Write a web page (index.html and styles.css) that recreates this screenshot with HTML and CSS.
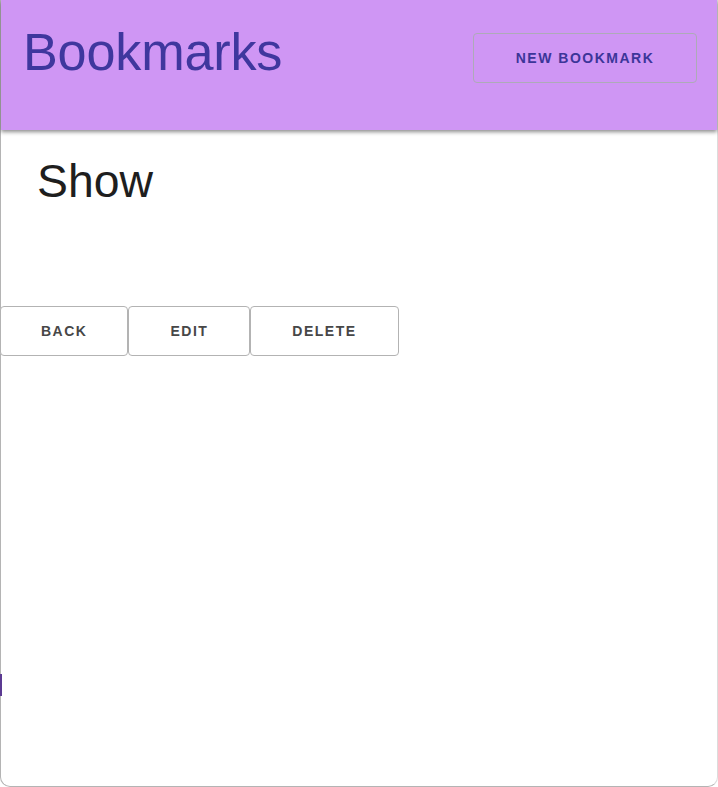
FILE: index.html
```html
<!DOCTYPE html>
<html>
<head>
<meta charset="utf-8">
<link rel="stylesheet" href="styles.css">
</head>
<body>
<div class="window">
  <header class="appbar">
    <h1 class="brand">Bookmarks</h1>
    <button class="btn btn-header">NEW BOOKMARK</button>
  </header>
  <main class="content">
    <h2 class="page-title">Show</h2>
    <div class="actions">
      <button class="btn">BACK</button>
      <button class="btn">EDIT</button>
      <button class="btn">DELETE</button>
    </div>
  </main>
  <span class="edge-mark"></span>
</div>
</body>
</html>
```
FILE: styles.css
```css
html, body {
  margin: 0;
  padding: 0;
  background: #ffffff;
}
body {
  font-family: "Liberation Sans", Arial, sans-serif;
}
.window {
  position: relative;
  box-sizing: border-box;
  width: 718px;
  height: 787px;
  border-left: 1px solid #b4b4b4;
  border-right: 1px solid #dcdcdc;
  border-bottom: 1px solid #b4b4b4;
  border-radius: 0 0 10px 10px;
  background: #ffffff;
}
.appbar {
  position: relative;
  z-index: 1;
  height: 130px;
  background: #cf96f4;
  box-shadow: 0 2px 4px rgba(0, 0, 0, 0.45);
  display: flex;
  justify-content: space-between;
  align-items: flex-start;
}
.brand {
  margin: 22px 0 0 22px;
  font-size: 52.2px;
  line-height: 60px;
  font-weight: 400;
  color: #3f379e;
  letter-spacing: -0.2px;
}
.btn {
  box-sizing: border-box;
  height: 50px;
  padding: 0 40px;
  background: #ffffff;
  border: 1px solid #b3b3b3;
  border-radius: 4px;
  box-shadow: none;
  font-family: "Liberation Sans", Arial, sans-serif;
  font-size: 14px;
  font-weight: 700;
  letter-spacing: 1.5px;
  color: #474747;
  cursor: pointer;
}
.actions .btn:nth-child(2),
.actions .btn:nth-child(3) {
  padding: 0 41px;
}
.btn-header {
  margin: 33px 20px 0 0;
  width: 224px;
  background: transparent;
  border-color: #aeaab8;
  color: #3c3599;
}
.content {
  padding: 0;
}
.page-title {
  margin: 23px 0 0 36px;
  font-size: 46.4px;
  line-height: 56px;
  font-weight: 400;
  color: #1e1e1e;
}
.actions {
  display: flex;
  margin: 97px 0 0 -1px;
}
.edge-mark {
  position: absolute;
  left: -1px;
  top: 674px;
  width: 2px;
  height: 22px;
  background: #5b3a92;
}
```
